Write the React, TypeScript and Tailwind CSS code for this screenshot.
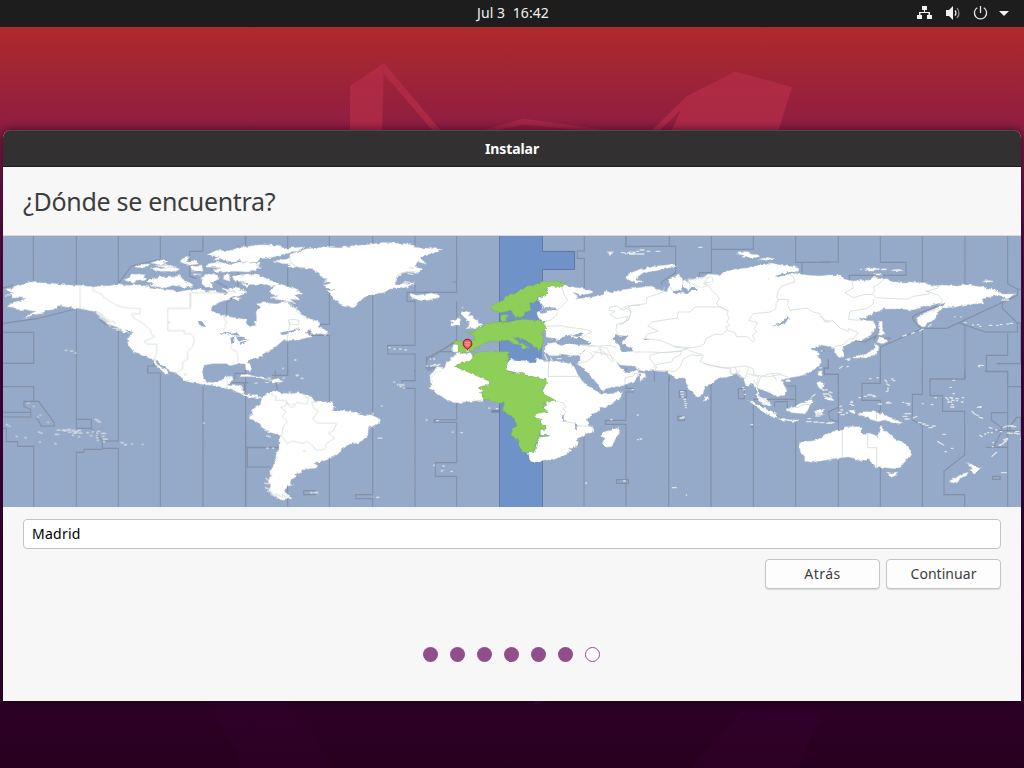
import React from "react";

const SEA = "#95a9c9";

type Tile = {
  x: number;
  y: number;
  land?: string;
  green?: string;
  water?: string;
  borders?: string;
  zones?: string;
  specks?: string;
};

// Each tile is drawn at three units per map pixel from its own origin.
const tiles: Tile[] = [
  {
    x: 0,
    y: 232,
    zones:
      "M100 12V150M229 12V160M229 228V420M355 12V155L395 102L481 82V12M609 12V58H569V132L590 140M714 40V185L680 212V260M737 12V42M0 170L40 160M9 274L110 260L240 228M9 301H101V394H9M298 262Q325 290 380 296M355 290V420M0 394H9M443 420V402H462V388M609 395V420M650 150L680 165V182",
    land:
      "M16 190L40 183L25 177L14 171L38 169L42 163L60 157L105 148L112 152L150 153L200 159L240 160L280 165L300 162L330 161L355 155L385 160L420 158L450 165L490 172L520 174L530 180L560 175L600 170L620 177L640 175L655 181L680 186L690 172L705 165L720 168L722 180L738 176L740 184L722 190L712 195L700 192L690 202L660 210L637 222L633 235L660 247L690 255L718 259L737 262L740 276L750 284L768 280L762 270L770 262L768 240L782 226L770 215L790 212L830 215L860 210L880 228L890 228L910 250L930 260L955 268L958 285L984 298L985 308L960 305L932 308L935 295L925 293L915 302L935 314L890 325L850 325L820 350L790 365L775 380L760 378L745 388L755 410L750 419L738 412L735 396L715 395L690 401L680 395L640 395L612 400L606 424L612 438L622 450L650 452L662 448L672 436L695 432L699 437L690 453L680 458L692 461L722 459L728 466L726 484L745 494L765 489L785 497L770 500L740 494L715 482L690 469L640 461L600 456L560 449L535 429L508 414L480 396L466 382L470 396L494 412L510 427L494 424L476 408L462 392L460 385L440 375L415 365L400 358L385 340L382 320L392 306L370 300L350 285L330 278L305 255L280 238L240 230L190 224L172 221L160 233L140 235L125 245L100 248L70 260L88 247L108 238L90 236L74 232L60 234L35 225L18 225L40 211L60 206L76 200L60 197L40 198L32 190Z M395 126L440 128L430 135L438 142L412 145L400 154L372 144L384 138ZM445 142L478 134L515 136L540 130L550 145L562 150L580 162L560 167L515 160L500 168L470 164L448 158L462 154L440 150ZM400 104L420 97L450 96L442 104L425 108ZM452 92L480 84L505 88L488 92L500 96L475 98ZM450 110L470 106L485 110L515 102L540 112L528 118L480 118ZM465 100L510 100L530 104L500 108ZM545 80L570 74L558 88L590 85L595 96L570 100L545 92ZM572 104L607 102L605 115L575 118ZM575 125L605 126L580 130ZM618 70L650 55L690 56L714 47L780 38L840 40L850 50L915 44L895 55L810 78L780 80L772 90L735 92L720 84L690 92L672 82L640 85L655 73ZM620 96L660 90L690 98L715 90L790 94L765 100L785 105L745 120L700 118L650 122L640 112L665 108L620 105ZM603 138L625 126L652 128L656 140L640 151L628 150L640 164L618 166L604 154ZM672 130L688 126L690 148L670 142ZM700 132L740 126L780 130L800 140L825 150L850 158L880 170L910 182L884 190L900 204L870 202L888 216L850 208L810 196L835 192L820 188L808 178L825 165L790 155L745 158L740 150L705 148ZM720 150L748 158L740 164ZM718 176L730 170L734 180Z M665 168L705 177L682 180ZM695 195L722 198L712 206Z",
    water:
      "M594 267L606 268L618 285L610 284L596 274ZM655 310L675 299L690 305L713 304L720 311L700 310L680 306ZM691 317L703 314V332L694 335ZM707 313L735 316L748 325L730 320L718 332ZM717 334L735 330L745 325L743 330L722 339ZM840 302L865 297L895 292L870 304L845 309ZM892 288L900 291L895 298ZM375 292L398 300L390 306Z",
    borders:
      "M240 160V230M278 165L277 175L305 186L310 196L355 222L390 229H420V245H395L400 257L412 264L430 274L450 293L455 308L465 313L432 328L440 336H470V365L460 385M680 182H571V229H503V296H553V305H572L578 312L584 323L577 345L563 358V382L548 390V410L532 420M680 250L673 252V262L682 270L672 280L678 286L668 295M695 337L693 350L712 360L715 395M503 267L510 271L504 275M571 182V229",
    specks: "M290 240l18 8m-10 0l20 10m-20-2l24 14m-8-14l18 14m-14 0l14 14m6-18l8 8m-8 14l16 2m-4 4l14 0",
  },
  {
    x: 240,
    y: 232,
    zones:
      "M16 12V38M143 12V60M143 105V165M268 12V44M398 12V33M525 12V42M525 155V180M650 12V181H501V208H525V340H443V366H525V420M650 208V325L635 338L559 378V408H600M268 120V277H210V310H268V420M398 190V420M143 330V420M143 270V310M638 150H650M779 12V205",
    land:
      "M100 86L150 80L148 67L200 50L260 45L300 48L330 42L380 38L430 31L500 35L525 41L522 46L555 48L609 52L575 62L566 70L540 78L560 96L532 90L525 104L552 114L535 122L500 119L480 127L470 140L468 155L490 157L525 155L500 165L480 170L450 171L432 182L405 186L375 195L355 210L340 228L325 225L310 223L285 205L270 186L260 175L285 176L250 160L272 152L250 148L262 144L248 138L240 125L215 110L180 106L143 105L155 96L128 95Z M508 188L514 184L530 190L556 187L575 183L598 190L594 197L575 203L550 207L530 203L515 196Z M660 240L675 238L692 240L685 248L700 252L699 262L712 265L716 274L728 276L720 285L675 291L690 281L680 276L690 270L672 255L664 247ZM655 258L662 262L659 277L634 283L632 277L642 272L630 266ZM640 338L655 335L656 360L642 360L637 350Z",
    borders:
      "M143 210Q170 228 170 238L205 262M145 264L162 262L178 266L175 278L148 276L145 264M150 80Q148 98 182 107M466 156L470 133Q480 120 515 120M150 270L140 330",
    specks: "M447 347h3m12 4h3m14 0h4m12 3h4m-335 30h4m402-3h2m-12 21h2m14-1h8m-2-4h6m-14 4h3m90-174h1m-160-120l12 3m-10 8l14 2m-20 5l14 2m-24 22l16 2m-20 2l12 2",
  },
  {
    x: 0,
    y: 370,
    zones:
      "M9 50H101V94H72V110L92 118V141H9M9 127H90M101 94H116L163 159V168H123L116 152L108 143M9 175H19V215H53V229H101V410M229 0V148H274V175L307 213H355V0M229 175V148M229 175H274M355 235H307V213M307 238H252V247H229V410M355 235V410M481 8V410M609 50V410M737 10V0M737 72V410M443 0V9H481M737 232H835M737 10H705V24H680M680 38H745",
    specks: "M83 100h3m14 9h2m18 26h2m-9 6h2m28 16h2m-30 29h4m3 3h4m-107-25h4m5 4h2m18 31h3m24 4h3m40 13h3m44 5h3m-2-28h10m-5-13h9m6 0h10m6-1h10m5 3h6m3 3h8m-43-3h8m6 4h8m7 3h10m8 0h8m-11-8h7m19 7h4m-48 8h4m15 4h3m38-15h4m13-1h4m7 6h12m-28-1h3m-20 8h3m14-2h3m16 4h4m-22 4h4m16 4h12m-12 8h4m-22-4h3m68 7h6m4 6h6m15-2h3m29 1h3m-144-75h4m2 4h5m1 4h5m251-142h5m52 145h3m152-120h6m-546-90h3m-32-8h4m12 2h6m648 123h6m-10 36h6m9 0h5",
  },
  {
    x: 240,
    y: 370,
    zones:
      "M105 0L112 65M143 0V16H95M268 0V95M268 265V410M398 0V132M398 165V374H347V386H398V410M525 0V32H486V55H525V410M650 98V149H582V157H650V278H586V319H650V410M17 70V0M0 38H13V78M22 233H118M22 233V291H92M143 340V410M17 160V410M191 362H227V374H191ZM650 -5H592L580 0M560 0H575M755 122H779V127H755Z",
    land:
      "M28 140L38 131L34 120L48 112L61 104L65 85L80 72L98 67L112 62L118 68L150 71L175 68L195 74L215 80L222 92L250 94L275 98L288 112L275 122L300 121L345 127L370 134L395 135L418 146L416 158L400 168L385 175L384 195L378 205L355 219L330 222L305 235L302 245L280 260L260 270L240 277L225 275L221 280L234 287L230 293L187 300L185 308L165 312L170 319L156 328L150 337L158 345L140 350L133 358L135 370L158 386L130 387L120 390L105 382L88 362L92 345L84 333L94 320L92 300L107 280L108 255L117 235L117 210L122 197L90 187L72 180L55 160L42 150L28 147Z M570 20L590 -10L640 -5L700 0L748 33L748 43L715 53L732 60L718 75L730 90L695 94L650 98L610 80L570 55L577 43L571 37Z M0 47L8 60L15 75L45 74L60 84L35 82L12 78ZM0 14L22 13L50 20L85 28L70 30L35 20L0 20ZM96 30L108 26L132 33L120 37L95 36ZM74 36L90 37L82 39ZM-40 26L-25 20L-20 28L-38 45Z",
    borders:
      "M98 68Q88 75 110 80L105 90L140 92L138 107L122 112L138 125L126 140L142 155L130 170L125 195L140 220L160 213L190 220L200 214L220 228L227 240H250L258 230L257 222L275 210L285 205L265 190L280 182L290 160L232 159L218 147L228 132L235 122L222 115L215 97L235 94M140 95Q145 110 160 112L170 97L200 102L205 84L190 75M118 200L125 195",
    specks: "M78 325l8 6m-12 8l12 2m-10 12l14 4m-8 6l14 4m-4 6l16 5m0-6l20 9m0-8l14 10m70-15h5m5 0h12m-6-2h2m180 16h7m-3-178h12m-2-96h3m-30 23h4m60-95h3m8 8h2m4 0h12m-10 6h6m3 4h6m-5-9h3m65 105h4m74 36h4m-59 100h3m20 16h5m136-188h5m-621-90h5m-50 0h8m-4 7h8m72-16h8m7 10h6m-20-8h3m-44-22h3m60 248h5m-116-45h6m2 2h3m-11 34h5m12 0h5",
  },
  {
    x: 420,
    y: 232,
    zones:
      "M366 58H464V112H366M366 112V152M493 12V57H472V79H493V168M618 12V44H660M110 325L20 385M366 12H366M346 226H420M340 350L346 360",
    green:
      "M135 299L160 301L164 293L185 284L200 278L218 272L240 270L262 271L285 266L310 262L350 265L375 269L371 276L381 288L365 302L370 320L365 345L357 356L345 344L333 335L320 327L300 317L278 317L295 330L315 338L330 345L320 347L310 353L303 340L285 335L265 324L240 328L215 326L190 336L165 350L160 358L145 357L125 364L113 358L116 338L98 334L105 326L145 329L165 322L162 312L150 304Z M243 263L242 252L260 246L267 250L256 258L262 266L248 269ZM215 220L250 205L262 192L285 185L320 165L360 152L400 148L440 152L426 165L395 161L378 170L380 186L355 198L350 207L328 212L333 233L315 243L308 254L285 258L280 245L272 237L250 240L232 243L226 237L217 235Z",
    land:
      "M615 140L625 125L660 112L710 102L758 97L770 102L710 116L670 122L645 140L670 150L650 154ZM560 62h22l-10 5ZM608 62h12l12-3 20 1-16 8Z",
    water:
      "M410 335L418 318L440 312L455 307L452 316L467 320L480 316L512 333L505 338L470 338L440 334L425 341ZM455 312L475 304L492 307L475 315ZM577 320L590 310L625 312L610 325L606 336L635 350L640 358L605 360L598 340ZM356 233L385 229L415 229L412 234L378 236L377 243L362 245Z",
    borders:
      "M425 165L432 185L442 205L420 228L412 232L410 250L390 265L375 269M380 283L425 281L440 285L480 290L500 293L515 300L500 307L485 317M660 221L635 220L625 225L610 235L590 222L570 225L568 235L585 238L570 248L590 260L625 253L615 270L590 278L588 295L595 310M485 340L540 342L570 340L590 348M540 345L552 362L575 374L580 390M515 375L540 350L545 372M625 225Q640 240 625 262L605 277",
    specks: "M398 370h18m-4 10h12m-50-12l8 16m10-6l6 10",
  },
  {
    x: 420,
    y: 350,
    zones:
      "M492 250V467M618 54V115H640V126H618V211H556V223H618V467M590 389H625V400H590ZM20 20V54H62M102 5L60 5",
    land:
      "M88 32L92 22L107 18L110 8L155 12L160 28L102 48L208 94L210 102L176 112L190 120L186 132L190 150L150 154L110 158L80 149L50 130L35 118L32 105L38 95L32 85L50 66L74 54L78 38ZM258 60L260 38L275 27L290 30L315 32L330 39L345 38L347 28L365 28L385 35L410 33L450 41L462 48L467 60L478 80L488 95L505 110L535 126L540 131L608 125L600 144L580 160L540 177L515 195L502 207L505 224L518 235L519 247L490 257L468 270L475 280L472 288L450 294L452 302L430 318L395 331L370 330L345 335L332 334L320 307L345 308L350 280L360 260L388 257L362 255L360 240L378 237L378 227L362 224L362 210L347 207L345 190L380 184L370 173L380 160L370 155L408 153L365 128L375 110L378 90L330 78L290 68ZM545 250L560 243L575 241L597 232L600 240L595 253L583 273L575 290L555 292L547 282L552 265L543 260Z M480 15L500 -10L560 -10L568 10L585 32L600 52L615 68L632 66L655 57L660 73L640 94L610 107L590 110L545 123L533 103L515 82L500 65L475 42L480 32Z",
    green:
      "M102 48L152 30L160 22L162 10L200 5L266 5L262 15L270 20L258 42L258 62L290 70L305 67L330 78L378 90L380 100L365 120L375 132L408 153L370 158L380 166L366 173L384 184L352 190L345 205L362 207V224L378 227V237H362L357 257L388 257L355 262L346 282L344 305L325 308L310 306L300 293L297 272L285 264L273 255L280 235L292 227L280 203L255 187L248 178L254 160L235 159L225 156L210 150L190 148L188 130L178 128L192 121L176 112L210 104L205 92Z",
    water:
      "M421 196L428 195L438 214L430 211ZM420 213L438 215L435 212ZM464 219L472 224L474 240L467 239Z",
    borders:
      "M385 36V82M385 79H480M408 155L430 158L433 165L438 170L428 177L437 183L433 194L423 197M436 214L465 220M468 228H518V238M518 5L550 10L558 14L575 35M470 42L500 34L520 20L510 6M615 100V83L640 78L645 70L658 72",
    specks: "M229 176h4m-182 36h4m68 36h4m-58 100h3m21 16h4m400 35h3m72-190h4m60-90h4m12 76h3m-3 74h3m-44 124h5m-575-366h3m-12 21h2m14-1h8m-2-4h6",
  },
  {
    x: 620,
    y: 232,
    zones:
      "M17 12V43H167V122L125 150V160M148 12V43M274 12V122H238V135M274 52H400V12M527 12V91H630M546 91V130M103 410V450M148 420V450M625 350V409H612V430M625 355L600 360M527 91L546 91",
    land:
      "M348 66L365 58L388 60L390 66L410 68L420 73L405 77L365 76L373 70ZM417 82L440 76L468 82L450 86ZM145 155L150 138L175 129L190 142L203 150L215 170L198 178L183 173L158 176ZM202 145L215 142L230 145L250 138L275 135L280 150L255 152L258 163L235 165L213 152Z",
    water:
      "M455 281L480 275L490 264L504 256L506 262L495 273L475 281ZM70 317l9 2l1 6l-8-2zM83 320l5 4h-7zM158 178L185 175L187 183L176 187L160 183ZM187 145L192 164L205 174L225 164L234 173L220 174L208 179L192 185L185 176L188 166ZM465 132L510 120L535 118L500 128L475 135ZM570 352L580 345L595 348L620 342L612 350L600 355L605 370L620 350L630 345V380L606 380L590 358Z",
    borders:
      "M133 165L130 180L80 197V215L20 222L0 235M15 227L33 237L27 263L0 278M75 320L120 325L133 330L160 342L185 345L210 348L240 343L253 335L258 320L285 306L305 308L322 293L318 285L330 280L320 270L328 260L320 245L325 237L300 225L225 225L210 240H175L172 258L95 270L83 282L115 298L80 307L75 320M262 140L250 155L265 160L275 175L290 190L298 198L290 215L300 225L325 237M322 295L345 302L350 315L380 313L400 330L405 325L397 310L410 300L403 290L412 272L386 265L400 245L450 240L468 230V215L475 205L470 195L475 175L485 162L525 150L520 135L507 125M475 202L505 203L503 220L510 235L560 228L580 240L600 245L615 270L630 270M40 360H90L140 362L180 357L205 350L160 345M90 370L120 362L185 358L180 370L160 378L155 390L120 395L105 400L90 380ZM100 405H110L105 415L165 418L180 405L190 380L215 368L240 372L245 365M205 355L250 370L240 388L260 398L320 410L345 405L375 402L400 410L402 428L440 435L480 428L505 435M250 395L300 405L330 408L335 425M345 405L355 430L375 440L385 410",
    specks: "M4 62h10m20 4h14m2-8h6m4-4h12m-20 12h20m10-8h8m18 0h12m-80 6h6m190-18h10m200 94h1",
  },
  {
    x: 820,
    y: 232,
    zones:
      "M55 12V90H0M181 12V91H258V130H88V150M307 12V155M435 12V160M563 12V155L593 172V190L380 289H307V450M593 172H602M547 210V229L592 273V300H497L415 272M435 275V441H330V450M563 302V370H499V418H563V450M602 395H530M602 395V300M307 289L205 335L181 345V450M205 335L210 318L180 320M160 325L170 310L135 330L90 325M307 289Q285 280 277 255L290 247L365 218M25 348V408H13V427H55V450M0 355H10M592 273H604M602 270V395",
    land:
      "M135 110L150 106L160 111L175 109L185 113L165 117L148 118ZM187 110h12v4h-13zM213 113L235 112L250 117L215 116ZM162 125h18l8 5h-18zM488 150L498 145L518 147L515 150ZM175 268L187 268V285L195 307L182 310L175 308L180 290ZM170 330L178 317L210 326L185 335ZM75 382L110 371L140 366L148 358L165 350L167 336L178 345L172 362L165 372L125 378L90 378L85 388ZM293 270L290 258L310 245L355 230L355 242L345 262L305 285Z",
    water:
      "M355 220l22-9l-8 12l-20 4z",
    borders:
      "M75 182L100 168L95 145M75 182L100 197L135 187L155 188L165 177L160 165L178 155L190 142M160 188L165 197L260 202L285 192L330 186L320 178L355 168M160 200V215L140 230L90 238L85 262L115 265M0 253L15 265L40 268L60 288L85 298V290L115 302L100 320L85 322L70 338L40 345M315 175L355 190L368 205L360 218",
    specks: "M122 112h2m310 160h4m20 7h2m12-1h4m3 5h4m25-3h8m14 0h5m6-2h5m15-2h4m5-2h8m-32-70h20m-90 196h8m-8 4h3m5-4h7m-320 37h4m40 4h4m0 5h5m175-1h5m0-191h1m18 1h1m-175 57l10-3m16-4l8-4m16-4l10-6m16-7l9-7M85 385l5-3M0 408l4-1m0-50h3m74 47l4-1m-26 6l8-6",
  },
  {
    x: 640,
    y: 370,
    zones:
      "M86 20V410M213 43V410M118 62H140V82H118ZM113 139H134V151H113ZM295 56H313V86H295ZM340 95V410M333 168H340V172H333M340 88H467V48H440M404 95H442V108M404 95V112M467 88V130M467 155V410M565 125L595 112V13H555M595 112V410M595 182V13M565 125L570 148L595 155M595 13L555 13M721 0V40H666V91H721V120L710 135M721 160V410M847 0V73H817V150L847 166V410M974 0V27H870V77H908V124H974V255L912 303V374H974V410M1037 0V5H1103V50H1144M1103 50V128H1054V150L1084 172V185L1060 235M1103 128V410M1142 142H1130L1110 170V182H1060M1037 232H1103M1058 319H1080V328H1058ZM1142 142V182H1103M442 95V115",
    land:
      "M325 92L340 95L365 112L390 122L410 130L412 142L398 140L368 124L350 110ZM412 146L430 145L448 149L475 150L475 156L450 153L425 151ZM440 115L460 112L478 101L500 92L512 88L520 94L510 105L504 120L495 132L475 130L455 128L443 122ZM530 38L540 34L550 40L548 55L535 52ZM555 85L570 78L575 85L585 88L580 92L565 90ZM524 125L535 121L555 120L545 125L550 135L540 136L535 130L530 140ZM625 122L640 120L650 125L645 132L635 128ZM655 131L670 125L700 125L735 133L745 140L768 148L788 161L755 158L735 150L715 155L690 148L685 141L660 136ZM477 222L490 215L520 212L545 204L560 192L575 187L590 180L605 181L615 170L660 170L668 175L662 186L670 193L700 193L714 200L719 175L722 165L738 185L752 192L765 205L785 216L803 227L813 240L812 255L795 275L782 292L765 296L735 293L708 293L695 280L685 265L665 275L652 268L625 261L605 263L575 267L560 270L540 273L515 277L490 273L495 262L480 240ZM740 306L755 309L770 306L768 316L755 322L745 316ZM982 278L995 282L1003 291L1025 292L1010 304L1003 310L995 306L990 300L997 296ZM928 333L950 322L965 312L985 307L980 317L960 325L955 335L940 338ZM190 80L203 78L207 88L195 92ZM355 84L370 88L395 105L390 108L372 104L355 92ZM535 5L547 2L543 18L533 15ZM435 32L445 28L453 32L442 37ZM0 8L15 10L18 22L0 34Z",
    water: "M662 270L674 273L684 267L688 276L675 284L674 275Z",
    borders:
      "M607 182V262M683 193V233H710V293M710 128V152M440 116L475 112L488 104L510 103M300 0L290 12L305 25M325 12L355 20L350 45L340 30M350 55L362 20L395 10L410 30M395 10L425 12M270 0V12H290V0",
    specks: "M122 65h8m-6 8h6m-4 8h4m2 7h5m-3 6h3m-2 7h5m-5 6h3m-1 6h2m-18 31h10m-4-3h6m175-88h3m0 6h3m-1 14h3m17 91h5M97 353h12m30 22h1m-140-168h5M540 55l10 4m0 2l12-2m6 7l8 2m-26 4h12m-10 6l8 3m-35-8l-10 8m50-10l10 10M500 155h14m8 1h12m6 2h12m8 2h16m-12-2h18m-78-12h8m15-8h12m-8-6h10M600 110l5-2m-2 12h5m-12 7h8m15 2h4m-20 5h10M630 103h6m-4-6h6m-2 9h5m-8-12h3m21-11h4m12-4h6m4-4h12m3 1h6m-5 4h8m-18-54h4m42 4l6 6m-1 6l8 4m-4 7v8m-5 4l5-2m-4 34l6-1m-30 6h8m15-3h14m34-2h5m6 3h12m-6 5h5m38-4h3m24 3h5m6-21h4m36 7l-8-8m12 1h8m-2 8h8m4-5h8m-5 6h3m-18 12h5m-8 7h10m-10-15h3m-12 0h5m7-10h3m26 10h5m-2-13h4m-32-12h4m-13-19h4m78 60h12m-6-2h6m-28 14l8 8m0 0l12 6m2 4l10 2m20 28l8 3m54 15h8m-27-18l10-4m4 0l14-2m-4 4h12m-4 19l14 3m0-8h-10m15 24h10m-4 22h3m1-162h4M1020 196l6 4m8-8h3m6-4h3m8 0h3m10-8h4m10 5h4m18 4h6m-18 20l12-4m-10 8l10-4m-12 8l8-2m-20 10l12-4m-14 5h5m-24-8h3m-4 12h3m-4 29l14-12m-136-12h5m-30-42h8m-24 22l18 10m-44-52h10m0-5h8m-28-2h8m-18-4h8m-20-4h8m-48-11h12m12-3l12-5m-36-8h16m-22 8h12m114 106h4m166 63h14",
  },
];

const eurasia =
  "M543 307L540 303L539 299L546 294L548 289L545 286L553 284L565 285L570 287L580 288L593 291L592 293L582 295L572 292L578 296L576 299L584 298L590 297L600 296L606 291L612 293L620 290L636 288L651 286L658 289L667 292L668 287L672 282L678 276L683 280L687 288L690 287L688 281L697 278L704 277L708 274L720 275L726 270L746 268L755 266L764 265L771 263L780 265L797 267L799 271L790 274L802 273L807 275L820 276L828 275L841 275L843 279L853 281L870 280L873 277L889 279L892 282L910 282L928 283L931 286L943 285L959 286L962 284L983 287L996 290L1003 294L1015 294L1007 299L998 295L990 297L982 299L984 303L964 305L956 307L944 308L936 313L933 320L922 327L918 321L920 315L938 307L941 303L928 306L913 310L900 309L883 309L868 316L859 320L873 321L876 326L871 335L862 340L852 342L843 347L844 356L838 357L833 349L827 346L820 345L814 348L820 352L818 356L822 362L815 369L807 374L800 376L789 378L781 380L784 385L787 391L785 394L777 397L770 393L763 390L758 388L758 395L770 402L770 406L763 405L757 396L756 390L753 384L746 386L743 378L735 373L729 377L720 378L713 383L705 386L703 394L698 398L690 390L684 378L676 378L668 372L655 371L642 370L632 366L620 365L607 354L600 349L583 350L580 355L572 356L562 354L552 357L545 353L545 348L547 344L558 342L557 339L546 337L546 330L543 324L545 321L540 320L537 314L541 309L557 308Z";

const zoneColor = "#8390a6";

function WorldMap() {
  return (
    <svg
      className="block h-[271px] w-[1018px]"
      viewBox="3 236 1018 271"
      aria-label="Mapa de zonas horarias"
    >
      <defs>
        <filter
          id="coast"
          filterUnits="userSpaceOnUse"
          x="3"
          y="236"
          width="1018"
          height="271"
          colorInterpolationFilters="sRGB"
        >
          <feTurbulence type="fractalNoise" baseFrequency="0.22" numOctaves="2" seed="4" />
          <feDisplacementMap
            in="SourceGraphic"
            scale="3.6"
            xChannelSelector="R"
            yChannelSelector="G"
          />
        </filter>
      </defs>
      <rect x="3" y="236" width="1018" height="271" fill={SEA} />
      <path d="M499 236H542V251.500H575V269H542V507H499Z" fill="#6f93c9" />
      {tiles.map((t, i) => (
        <g key={i} transform={`translate(${t.x} ${t.y}) scale(.33333)`} fill="none">
          <path d={t.zones} stroke={zoneColor} strokeWidth="3.300" />
        </g>
      ))}
      <path
        d="M499.500 236V507M542.500 236V251.500H574.500V269.500H542.500V300M542.500 461V507M492 411H499"
        fill="none"
        stroke="#607ca6"
      />
      <g filter="url(#coast)">
        <path d={eurasia} fill="#fff" stroke="#c8d1d2" strokeWidth=".5" />
        {tiles.map((t, i) => (
          <g key={i} transform={`translate(${t.x} ${t.y}) scale(.33333)`}>
            <path d={t.land} fill="#fff" stroke="#c8d1d2" strokeWidth="1.500" />
          </g>
        ))}
        {tiles.map((t, i) => (
          <g key={i} transform={`translate(${t.x} ${t.y}) scale(.33333)`}>
            <path d={t.green} fill="#8ecf59" stroke="#7db34f" strokeWidth="1.500" />
            <path d={t.water} fill={SEA} />
          </g>
        ))}
      </g>
      {tiles.map((t, i) => (
        <g key={i} transform={`translate(${t.x} ${t.y}) scale(.33333)`}>
          <path d={t.borders} fill="none" stroke="#d2dad8" strokeWidth="2.400" />
          <path
            d={t.specks}
            fill="none"
            stroke="#dde4e2"
            strokeWidth="4"
            strokeLinecap="round"
          />
        </g>
      ))}
      <g>
        <path d="M467.500 348V352" stroke="#f0dede" strokeWidth="2" />
        <path d="M467.500 346V350.500" stroke="#7b3030" />
        <path
          d="M467.500 349.300C465 347.500 463.200 346.300 463.200 343.700A4.300 4.300 0 0 1 471.800 343.700C471.800 346.300 470 347.500 467.500 349.300Z"
          fill="#ef6668"
          stroke="#a51f25"
          strokeWidth="1.100"
        />
        <path d="M465.300 342.700H469.700M465.500 345H469.500" stroke="#ffc0bf" strokeWidth=".8" />
      </g>
    </svg>
  );
}

function Wallpaper() {
  return (
    <svg className="absolute inset-0 h-[768px] w-[1024px]" viewBox="0 0 1024 768" aria-hidden="true">
      <g fill="#b52e49" fillOpacity=".72">
        <path d="M350 86L384 63L382 132H350Z" />
        <path d="M384 63L442 132H434L384 74Z" />
        <path d="M484 130L523 118.500L606 130H580L523 124.500L499 130Z" fillOpacity=".5" />
        <path d="M652 130L687 96L735 71.500L792 87L778 132H671L681 110L660 130Z" />
      </g>
      <path d="M744 708H824L798 768H690Z" fill="#430043" fillOpacity=".16" />
      <path d="M205 700H290L335 768H245Z" fill="#430043" fillOpacity=".14" />
      <path d="M532 700H552L535 704Z" fill="#49053c" />
    </svg>
  );
}

function StatusIcons() {
  return (
    <svg className="h-[27px] w-[110px]" viewBox="914 0 110 27" fill="#f1f1f1" aria-hidden="true">
      <path d="M922 6h5v4h-2v2h5v3h2v4h-5v-4h1.500v-2h-8v2h1.500v4h-5v-4h2v-3h5v-2h-2Z" />
      <path d="M946 10h3l4-4v14l-4-4h-3Z" />
      <path d="M955 10.300Q957 13 955 15.700" fill="none" stroke="#f1f1f1" strokeWidth="1.200" />
      <path d="M957 8Q961 13 957 18" fill="none" stroke="#999" strokeWidth="1.200" />
      <path
        d="M977.200 7.700A6.100 6.100 0 1 0 983.800 7.700M980.500 6V13"
        fill="none"
        stroke="#e5e5e5"
        strokeWidth="1.300"
      />
      <path d="M999 11h10l-5 5Z" />
    </svg>
  );
}

const steps = [true, true, true, true, true, true, false];

export default function App() {
  return (
    <div className="relative flex h-[768px] w-[1024px] flex-col overflow-hidden bg-[linear-gradient(180deg,#af2a2b_27px,#8f1e41_125px,#5c0f45_230px,#450340_400px,#33002d_650px,#28001f_768px)] font-['Noto_Sans','Open_Sans',sans-serif]">
      <Wallpaper />
      <header className="relative grid h-[27px] shrink-0 grid-cols-3 items-start bg-[#1d1d1d]">
        <span />
        <time className="whitespace-pre pl-[2px] text-center text-[14px] leading-[25px] tracking-[0.100px] text-[#f2f2f2]">
          Jul 3  16:42
        </time>
        <div className="flex justify-end">
          <StatusIcons />
        </div>
      </header>

      <main className="relative mx-[3px] mt-[103px] flex h-[571px] shrink-0 flex-col overflow-hidden rounded-t-[8px] bg-[#f7f7f7] shadow-[0_1px_8px_2px_rgba(20,0,20,0.55)]">
        <div className="flex h-[37px] shrink-0 items-center justify-center border-t border-b border-t-[#4b4a4a] border-b-[#1c1b1b] bg-[#323031]">
          <h1 className="text-[14px] font-bold tracking-[-0.080px] text-white">Instalar</h1>
        </div>
        <div className="flex h-[69px] shrink-0 items-center border-b border-[#d9d9d9] px-5 pt-[2px]">
          <h2 className="text-[25px] tracking-[-0.310px] text-[#3d3d3d]">¿Dónde se encuentra?</h2>
        </div>
        <WorldMap />
        <div className="flex flex-col px-5 pt-3">
          <input
            className="h-[30px] rounded-[4px] border border-[#c3c3c3] bg-white px-2 pb-[2px] text-[14px] tracking-[0.250px] text-black outline-none"
            defaultValue="Madrid"
          />
          <div className="mt-[10px] flex justify-end gap-[6px]">
            <button className="h-[30px] w-[115px] rounded-[4px] border border-[#c5c5c5] bg-[#fdfdfd] pb-[2px] text-[14px] tracking-[0.500px] text-[#3d3d3d] shadow-[0_1px_1px_rgba(0,0,0,0.12)]">
              Atrás
            </button>
            <button className="h-[30px] w-[115px] rounded-[4px] border border-[#c5c5c5] bg-[#fdfdfd] pb-[2px] text-[14px] tracking-[0.050px] text-[#3d3d3d] shadow-[0_1px_1px_rgba(0,0,0,0.12)]">
              Continuar
            </button>
          </div>
          <div className="mt-[58px] flex justify-center gap-3 pr-[1px]">
            {steps.map((done, i) => (
              <span
                key={i}
                className={
                  done
                    ? "size-[15px] rounded-full bg-[#924d8b]"
                    : "size-[15px] rounded-full border border-[#924d8b] bg-white"
                }
              />
            ))}
          </div>
        </div>
      </main>
    </div>
  );
}
